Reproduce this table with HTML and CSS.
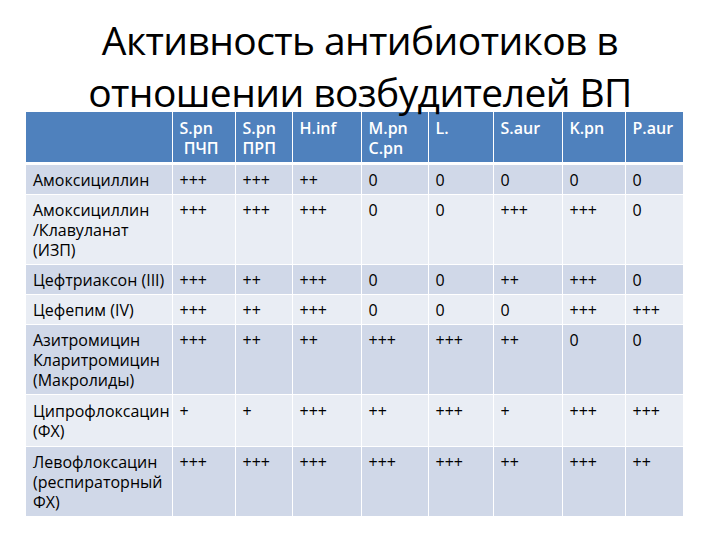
FILE: index.html
```html
<!DOCTYPE html>
<html lang="ru">
<head>
<meta charset="utf-8">
<title>Активность антибиотиков</title>
<link rel="stylesheet" href="styles.css">
</head>
<body>
<div class="slide">
  <h1 class="title">Активность антибиотиков в<br>отношении возбудителей ВП</h1>
  <table class="grid">
    <colgroup>
      <col class="c-name"><col class="c1"><col class="c2"><col class="c3"><col class="c4"><col class="c5"><col class="c6"><col class="c7"><col class="c8">
    </colgroup>
    <thead>
      <tr>
        <th></th>
        <th>S.pn<br>&nbsp;ПЧП</th>
        <th>S.pn<br>ПРП</th>
        <th>H.inf</th>
        <th>M.pn<br>C.pn</th>
        <th>L.</th>
        <th>S.aur</th>
        <th>K.pn</th>
        <th>P.aur</th>
      </tr>
    </thead>
    <tbody>
      <tr><td>Амоксициллин</td><td>+++</td><td>+++</td><td>++</td><td>0</td><td>0</td><td>0</td><td>0</td><td>0</td></tr>
      <tr><td>Амоксициллин<br>/Клавуланат<br>(ИЗП)</td><td>+++</td><td>+++</td><td>+++</td><td>0</td><td>0</td><td>+++</td><td>+++</td><td>0</td></tr>
      <tr><td>Цефтриаксон (III)</td><td>+++</td><td>++</td><td>+++</td><td>0</td><td>0</td><td>++</td><td>+++</td><td>0</td></tr>
      <tr><td>Цефепим (IV)</td><td>+++</td><td>++</td><td>+++</td><td>0</td><td>0</td><td>0</td><td>+++</td><td>+++</td></tr>
      <tr><td>Азитромицин<br>Кларитромицин<br>(Макролиды)</td><td>+++</td><td>++</td><td>++</td><td>+++</td><td>+++</td><td>++</td><td>0</td><td>0</td></tr>
      <tr class="two"><td>Ципрофлоксацин<br>(ФХ)</td><td>+</td><td>+</td><td>+++</td><td>++</td><td>+++</td><td>+</td><td>+++</td><td>+++</td></tr>
      <tr><td>Левофлоксацин<br>(респираторный<br>ФХ)</td><td>+++</td><td>+++</td><td>+++</td><td>+++</td><td>+++</td><td>++</td><td>+++</td><td>++</td></tr>
    </tbody>
  </table>
</div>
</body>
</html>
```
FILE: styles.css
```css
html, body {
  margin: 0;
  padding: 0;
  background: #ffffff;
}
.slide {
  width: 720px;
  height: 540px;
  overflow: hidden;
  font-family: "Open Sans", "Noto Sans", sans-serif;
  color: #000000;
}
.title {
  position: relative;
  z-index: 1;
  box-sizing: border-box;
  height: 112px;
  margin: 0;
  padding-top: 14px;
  font-size: 39px;
  font-weight: 400;
  line-height: 52px;
  text-align: center;
  letter-spacing: -0.6px;
}
.grid {
  margin-left: 26px;
  width: 657px;
  table-layout: fixed;
  border-collapse: collapse;
  font-size: 16px;
  line-height: 20px;
}
.c-name { width: 146px; }
.c1 { width: 63px; }
.c2 { width: 57px; }
.c3 { width: 69px; }
.c4 { width: 67px; }
.c5 { width: 65px; }
.c6 { width: 69px; }
.c7 { width: 63px; }
.c8 { width: 58px; }
.grid th,
.grid td {
  text-align: left;
  vertical-align: top;
  padding: 5px 6px 4px 7px;
  border: 1px solid #ffffff;
  white-space: nowrap;
}
.grid th {
  background: #4f81bd;
  color: #ffffff;
  font-weight: 600;
  height: 39px;
  padding-top: 6px;
  border-bottom: 3px solid #ffffff;
  border-top: none;
}
.grid .two td { padding-top: 6px; padding-bottom: 5px; }
.grid tr > :first-child { border-left: none; }
.grid tr > :last-child { border-right: none; }
.grid tbody tr:nth-child(odd) td { background: #d0d8e8; }
.grid tbody tr:nth-child(even) td { background: #e9edf4; }
.grid tbody tr:last-child td { border-bottom: none; }
```
